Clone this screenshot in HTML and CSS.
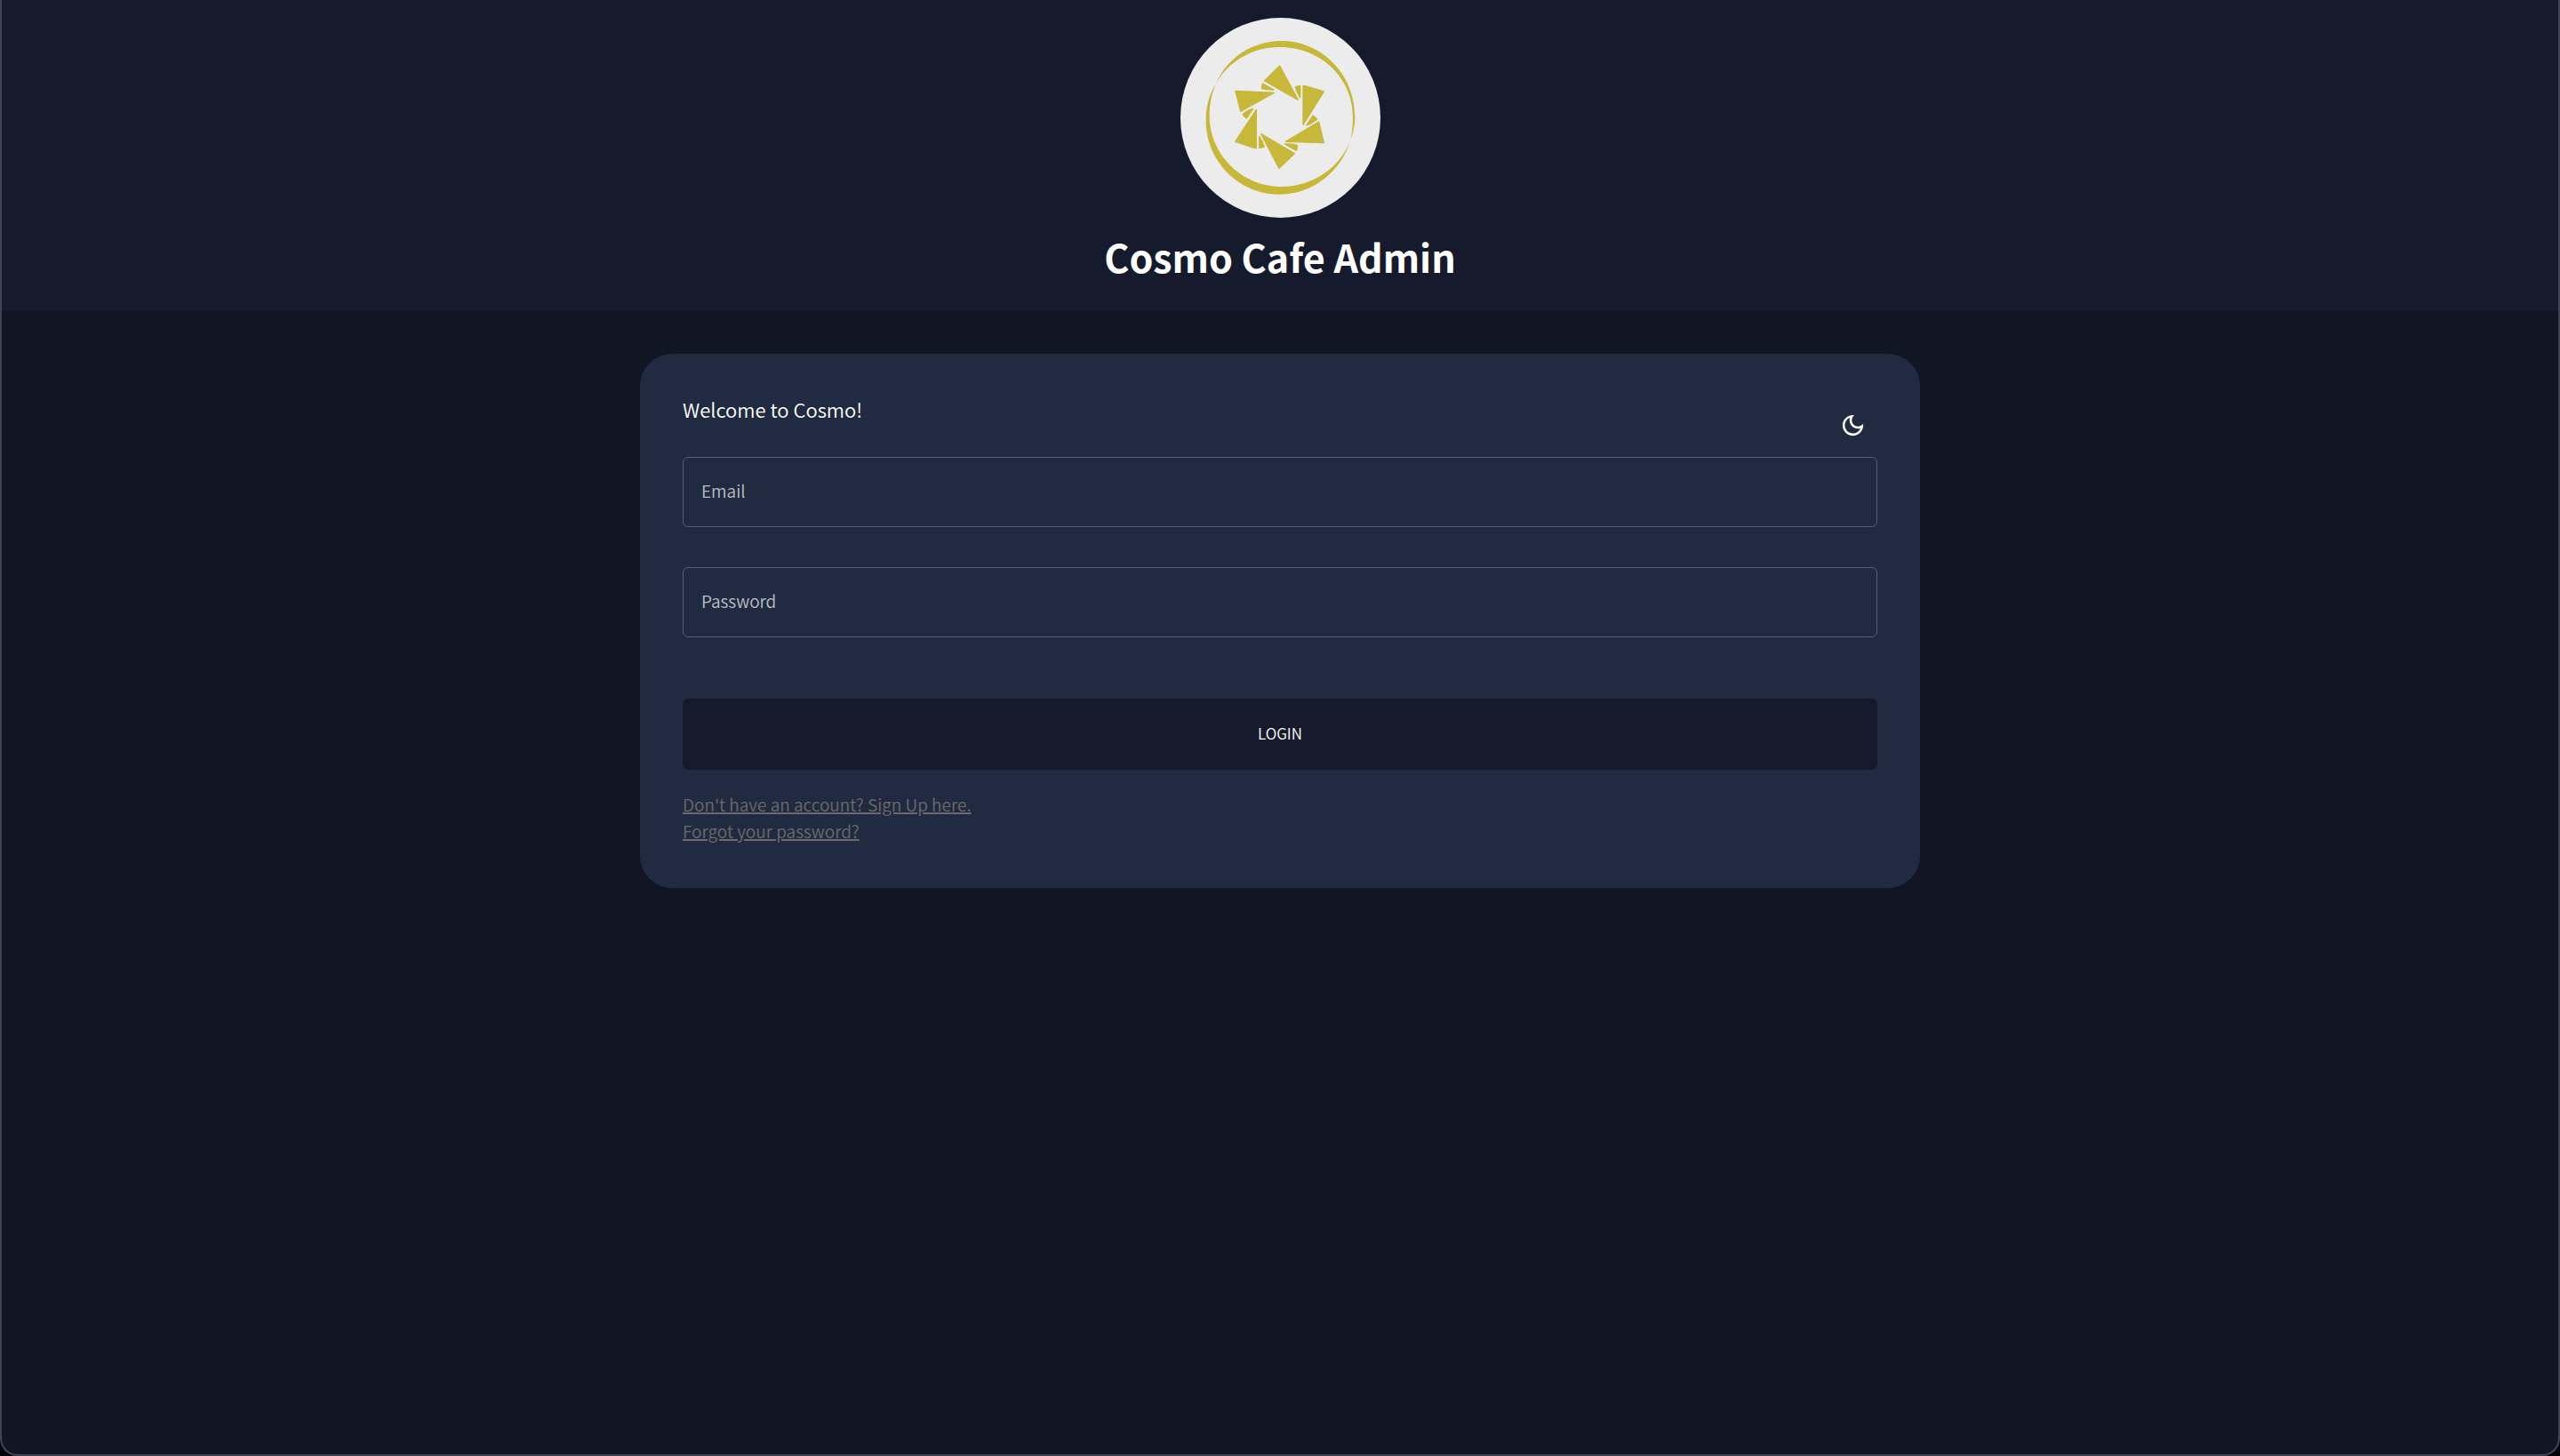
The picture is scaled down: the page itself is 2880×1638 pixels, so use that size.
FILE: index.html
```html
<!DOCTYPE html>
<html lang="en">
<head>
<meta charset="utf-8">
<meta name="viewport" content="width=device-width, initial-scale=1">
<title>Cosmo Cafe Admin</title>
<link rel="stylesheet" href="styles.css">
</head>
<body>
<div class="page">
  <header class="banner">
    <svg class="logo" viewBox="24 30 675 675" role="img" aria-label="Cosmo Cafe">
      <circle cx="361.5" cy="367.5" r="337.500" fill="#ececec"/>
      <g fill="#c8b83a">
        <path d="M143 254C180 166 266 108 365 108C502 108 613 222 613 365C613 392 608 417 598 444C604 418 606 385 606 365C606 233 498 129 358 129C270 129 186 175 143 254Z"/>
        <path d="M143 254C128 290 122 325 122 360C122 492 232 600 365 600C470 600 562 536 598 444C564 552 470 626 358 626C222 626 110 514 110 377C110 330 120 290 143 254Z"/>
      </g>
      <g fill="#c8b83a" stroke="#c8b83a" stroke-width="4" stroke-linejoin="round">
        <path d="M359 192L421 307L307 243Z"/>
        <path d="M438 259L445 260L508 279L438 391Z"/>
        <path d="M491 381L508 452L379 448Z"/>
        <path d="M296 422L409 488L357 538Z"/>
        <path d="M280 340V470L272 469L209 448Z"/>
        <path d="M210 277L340 283L227 346Z"/>
        <path d="M302 252L339 273Q318 274 299 269Q298 259 302 252Z"/>
        <path d="M428 260V299Q417 283 412 264Q420 260 428 260Z"/>
        <path d="M449 393L471 360Q480 365 485 373Q469 387 449 393Z"/>
        <path d="M376 456Q400 456 418 460Q419 470 415 478Z"/>
        <path d="M290 430Q302 448 307 465Q299 470 290 469Z"/>
        <path d="M269 337L247 369Q239 364 234 356Q249 342 269 337Z"/>
      </g>
    </svg>
    <h1 class="title">Cosmo Cafe Admin</h1>
  </header>

  <main class="card">
    <div class="card-head">
      <h2 class="welcome">Welcome to Cosmo!</h2>
      <button class="theme-toggle" type="button" aria-label="Toggle dark mode">
        <svg class="moon" viewBox="0 0 24 24" aria-hidden="true"><path fill="currentColor" d="M9.37 5.51c-.18.64-.27 1.31-.27 1.99 0 4.08 3.32 7.4 7.4 7.4.68 0 1.35-.09 1.99-.27C17.45 17.19 14.93 19 12 19c-3.86 0-7-3.14-7-7 0-2.93 1.81-5.45 4.37-6.49zM12 3c-4.97 0-9 4.03-9 9s4.03 9 9 9 9-4.03 9-9c0-.46-.04-.92-.1-1.36-.98 1.37-2.58 2.26-4.4 2.26-2.98 0-5.4-2.42-5.4-5.4 0-1.81.89-3.42 2.26-4.4-.44-.06-.9-.1-1.36-.1z"/></svg>
      </button>
    </div>
    <form class="form">
      <div class="field">
        <input class="input" id="email" type="email" name="email" autocomplete="username">
        <label class="label" for="email">Email</label>
      </div>
      <div class="field">
        <input class="input" id="password" type="password" name="password" autocomplete="current-password">
        <label class="label" for="password">Password</label>
      </div>
      <button class="login" type="submit">LOGIN</button>
    </form>
    <nav class="links">
      <a class="link" href="#signup">Don't have an account? Sign Up here.</a>
      <a class="link" href="#reset">Forgot your password?</a>
    </nav>
  </main>
</div>
</body>
</html>
```
FILE: styles.css
```css
* {
  box-sizing: border-box;
}

body {
  margin: 0;
  background: #02020a;
  color: #ffffff;
  font-family: "Noto Sans CJK SC", "Noto Sans", sans-serif;
  font-size: 19px;
  font-weight: 350;
}

.page {
  min-height: 100vh;
  overflow: hidden;
  border: 2px solid #3f4552;
  border-top: 0;
  border-radius: 0 0 20px 20px;
  background: #101623;
}

.banner {
  display: flex;
  flex-direction: column;
  align-items: center;
  padding: 20px 0 26px;
  background: #151b2c;
}

.logo {
  width: 225px;
  height: 225px;
}

.title {
  margin: 8px 0 0;
  font-size: 43px;
  font-weight: 700;
  line-height: 71px;
}

.card {
  width: calc(50% + 2px);
  margin: 48px auto;
  padding: 48px;
  border-radius: 36px;
  background: #202a40;
}

.card-head {
  display: flex;
  justify-content: space-between;
  height: 68px;
}

.welcome {
  margin: 0;
  font-size: 22px;
  font-weight: 350;
  line-height: 28px;
}

.theme-toggle {
  display: flex;
  align-self: flex-start;
  margin-top: 5px;
  padding: 12px;
  border: 0;
  border-radius: 50%;
  background: none;
  color: inherit;
  cursor: pointer;
}

.moon {
  width: 31px;
  height: 31px;
}

.form {
  display: flex;
  flex-direction: column;
}

.field {
  display: grid;
  align-items: center;
  margin-bottom: 45px;
}

.input,
.label {
  grid-area: 1 / 1;
}

.input {
  width: 100%;
  height: 79px;
  padding: 0 21px;
  border: 1px solid #56606d;
  border-radius: 6px;
  background: none;
  color: inherit;
  font: inherit;
}

.label {
  justify-self: start;
  padding: 0 0 4px 21px;
  color: #bcbfc5;
  line-height: 30px;
  pointer-events: none;
}

.login {
  height: 80px;
  margin-top: 24px;
  padding: 0 0 3px;
  border: 0;
  border-radius: 6px;
  background: #151b2c;
  color: inherit;
  font: inherit;
  font-size: 17px;
  cursor: pointer;
}

.links {
  display: flex;
  flex-direction: column;
  align-items: flex-start;
  padding: 24px 0 1px;
}

.link {
  color: #6b6b6b;
  line-height: 30px;
  text-decoration-thickness: 2px;
}
```
